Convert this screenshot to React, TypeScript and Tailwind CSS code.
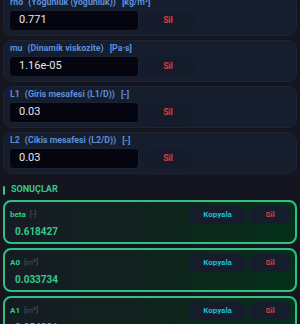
import React from "react";

type Field = { key: string; desc: string; unit: string; value: string };
type Result = { key: string; unit: string; value: string };

const fields: Field[] = [
  { key: "rho", desc: "(Yogunluk (yogunluk))", unit: "[kg/m³]", value: "0.771" },
  { key: "mu", desc: "(Dinamik viskozite)", unit: "[Pa·s]", value: "1.16e-05" },
  { key: "L1", desc: "(Giris mesafesi (L1/D))", unit: "[-]", value: "0.03" },
  { key: "L2", desc: "(Cikis mesafesi (L2/D))", unit: "[-]", value: "0.03" },
];

const results: Result[] = [
  { key: "beta", unit: "[-]", value: "0.618427" },
  { key: "A0", unit: "[m²]", value: "0.033734" },
  { key: "A1", unit: "[m²]", value: "0.054321" },
];

const InputCard = ({ f }: { f: Field }) => (
  <div className="rounded-[9px] border border-[#1c2535] bg-[#161d2c] pl-[5px] pr-[5px] pt-[2px] pb-[4px]">
    <div className="flex h-[10px] items-center whitespace-nowrap pl-[1px] text-[8.8px] font-bold leading-[10px] text-[#5b8fd9]">
      <span>{f.key}</span>
      <span className="ml-[5px]">{f.desc}</span>
      <span className="ml-[6px]">{f.unit}</span>
    </div>
    <div className="mt-[3px] flex items-center">
      <div className="flex h-[21px] w-[130px] items-center rounded-[4px] border border-[#1b2131] bg-[#04050e] pl-[9px] text-[11px] text-[#e5e7eb]">
        {f.value}
      </div>
      <button className="ml-[3px] flex h-[20px] w-[52px] items-center justify-center rounded-full bg-[#141b2a] text-[8.5px] font-bold text-[#e0393e]">
        Sil
      </button>
    </div>
  </div>
);

const ResultCard = ({ r }: { r: Result }) => (
  <div className="rounded-[8px] border-2 border-[#31c081] bg-gradient-to-r from-[#161b23] via-[#0f231d] to-[#03301a] pl-[5px] pr-[4px] pt-[4px] pb-[3px]">
    <div className="flex h-[18px] items-center">
      <span className="text-[8px] font-bold text-[#34c98a]">{r.key}</span>
      <span className="ml-[4px] text-[8px] text-[#4b5563]">{r.unit}</span>
      <div className="ml-auto flex gap-[2px]">
        <button className="flex h-[18px] w-[59px] items-center justify-center rounded-full bg-[#151c2c] text-[8px] font-bold text-[#22bcd6]">
          Kopyala
        </button>
        <button className="flex h-[18px] w-[42px] items-center justify-center rounded-full bg-[#151c2c] text-[8px] font-bold text-[#e0393e]">
          Sil
        </button>
      </div>
    </div>
    <div className="mt-[1px] pl-[5px] text-[10px] font-bold leading-[14px] text-[#34c98a]">
      {r.value}
    </div>
  </div>
);

export default function App() {
  return (
    <div
      className="h-[324px] overflow-hidden bg-[#14151e] px-[3px]"
      style={{ fontFamily: "Roboto, 'Liberation Sans', sans-serif" }}
    >
      <div className="-mt-[6px] flex flex-col gap-[4px]">
        {fields.map((f) => (
          <InputCard key={f.key} f={f} />
        ))}
      </div>
      <div className="mt-[10px] mb-[4px] flex h-[12px] items-center">
        <div className="h-[9px] w-[2px] rounded-full bg-[#34c98a]" />
        <span className="ml-[6px] text-[9px] font-bold text-[#34c98a]">
          SONUÇLAR
        </span>
      </div>
      <div className="flex flex-col gap-[4px]">
        {results.map((r) => (
          <ResultCard key={r.key} r={r} />
        ))}
      </div>
    </div>
  );
}
